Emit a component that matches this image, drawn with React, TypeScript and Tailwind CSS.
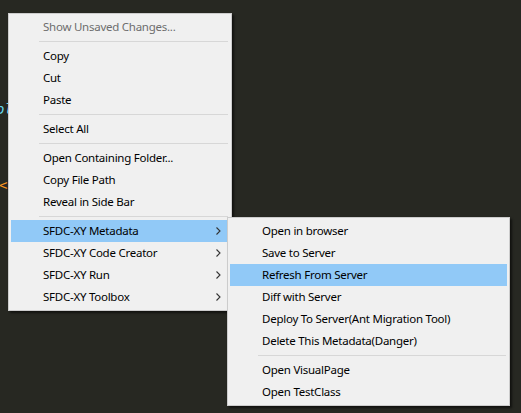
import React from "react";

type Item = { label: string; disabled?: boolean; sub?: boolean; active?: boolean } | "sep";

const mainItems: Item[] = [
  { label: "Show Unsaved Changes...", disabled: true },
  "sep",
  { label: "Copy" },
  { label: "Cut" },
  { label: "Paste" },
  "sep",
  { label: "Select All" },
  "sep",
  { label: "Open Containing Folder..." },
  { label: "Copy File Path" },
  { label: "Reveal in Side Bar" },
  "sep",
  { label: "SFDC-XY Metadata", sub: true, active: true },
  { label: "SFDC-XY Code Creator", sub: true },
  { label: "SFDC-XY Run", sub: true },
  { label: "SFDC-XY Toolbox", sub: true },
];

const subItems: Item[] = [
  { label: "Open in browser" },
  { label: "Save to Server" },
  { label: "Refresh From Server", active: true },
  { label: "Diff with Server" },
  { label: "Deploy To Server(Ant Migration Tool)" },
  { label: "Delete This Metadata(Danger)" },
  "sep",
  { label: "Open VisualPage" },
  { label: "Open TestClass" },
];

function Chevron() {
  return (
    <svg width="5" height="8" viewBox="0 0 5 8" className="block">
      <path d="M0.5 0.5 L4 4 L0.5 7.5" fill="none" stroke="#333" strokeWidth="1.1" />
    </svg>
  );
}

function Menu({ items, className }: { items: Item[]; className: string }) {
  return (
    <div
      className={`absolute flex flex-col border border-[#cccccc] bg-[#f0f0f0] p-[2px] shadow-[2px_2px_2px_rgba(0,0,0,0.55)] ${className}`}
    >
      {items.map((it, i) =>
        it === "sep" ? (
          <div key={i} className="flex h-[7px] items-center pl-[28px] pr-[1px]">
            <div className="h-px w-full bg-[#d7d7d7]" />
          </div>
        ) : (
          <div
            key={i}
            className={`flex h-[22px] items-center pl-[32px] pr-[8px] ${it.active ? "bg-[#91c9f7]" : ""} ${
              it.disabled ? "text-[#6d6d6d]" : "text-black"
            }`}
          >
            <span className="flex-1 whitespace-nowrap">{it.label}</span>
            {it.sub && <Chevron />}
          </div>
        )
      )}
    </div>
  );
}

export default function App() {
  return (
    <div
      className="relative h-[413px] w-[521px] overflow-hidden bg-[#272822] text-[11.5px] leading-[16px] tracking-[-0.25px]"
      style={{ fontFamily: '"Noto Sans", "Open Sans", sans-serif' }}
    >
      <div className="absolute left-[-4px] top-[101px] text-[14px] italic tracking-normal text-[#66d9ef]" style={{ fontFamily: '"DejaVu Sans Mono", monospace' }}>
        ol
      </div>
      <div className="absolute left-[-1px] top-[177px] text-[14px] tracking-normal text-[#fd971f]" style={{ fontFamily: '"DejaVu Sans Mono", monospace' }}>
        &lt;<span className="text-[#66d9ef]">:</span>
      </div>
      <Menu items={mainItems} className="left-[8px] top-[13px] w-[224px]" />
      <Menu items={subItems} className="left-[227px] top-[217px] w-[283px]" />
    </div>
  );
}
